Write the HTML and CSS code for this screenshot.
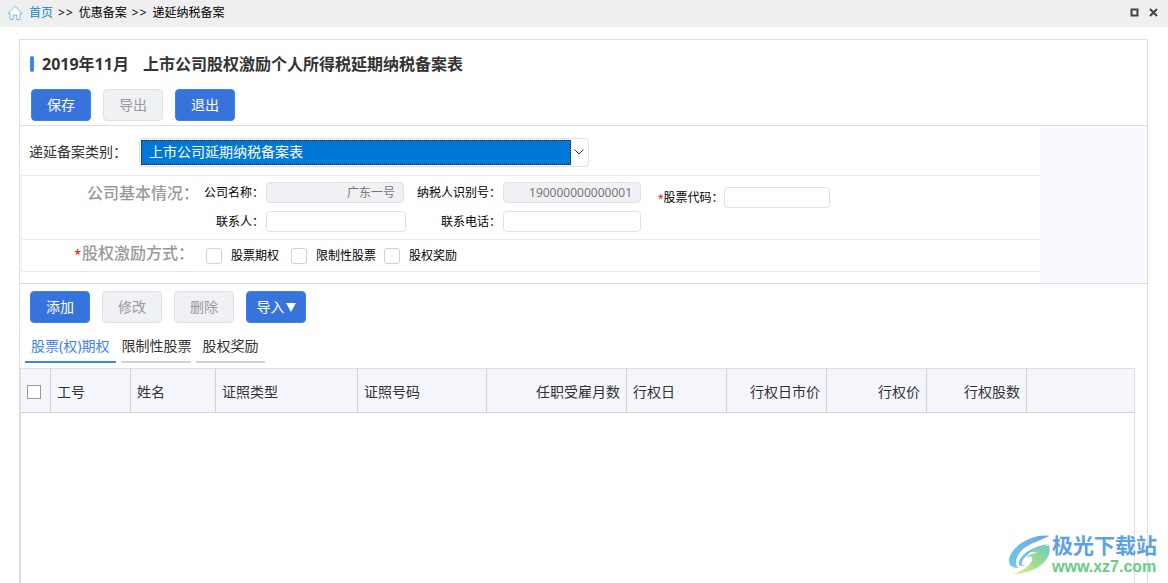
FILE: index.html
```html
<!DOCTYPE html>
<html lang="zh-CN">
<head>
<meta charset="utf-8">
<title>递延纳税备案</title>
<link rel="stylesheet" href="styles.css">
</head>
<body>
<header class="topbar">
  <svg class="home" viewBox="0 0 16 16" aria-hidden="true"><path d="M1 8.500 8 1.200l7 7.300h-2v6H9.800V10H6.200v4.500H3v-6z"/></svg>
  <nav class="crumbs">
    <a href="#">首页</a><span class="sep">&gt;&gt;</span><span>优惠备案</span><span class="sep">&gt;&gt;</span><span>递延纳税备案</span>
  </nav>
  <button class="win" type="button" aria-label="最大化"><svg viewBox="0 0 9 9"><path d="M1.500 1.500h6v6h-6z"/></svg></button>
  <button class="win" type="button" aria-label="关闭"><svg viewBox="0 0 9 9"><path d="M1 1l7 7M8 1l-7 7"/></svg></button>
</header>
<main class="panel">
  <h1 class="title"><span>2019年11月</span><span>上市公司股权激励个人所得税延期纳税备案表</span></h1>
  <div class="actions">
    <button class="btn primary" type="button">保存</button>
    <button class="btn" type="button" disabled>导出</button>
    <button class="btn primary" type="button">退出</button>
  </div>
  <section class="filing">
    <div class="form">
      <div class="category">
        <label for="kind">递延备案类别：</label>
        <div class="picker">
          <select id="kind"><option>上市公司延期纳税备案表</option></select>
          <svg viewBox="0 0 10 6" aria-hidden="true"><path d="M.5.5 5 5 9.500.5"/></svg>
        </div>
      </div>
      <div class="group">
        <div class="legend">公司基本情况：</div>
        <div class="fields">
          <label for="name">公司名称：</label><input class="short" id="name" value="广东一号" disabled>
          <label for="tax">纳税人识别号：</label><input id="tax" value="190000000000001" disabled>
          <label for="person">联系人：</label><input id="person">
          <label for="phone">联系电话：</label><input id="phone">
        </div>
        <div class="stock">
          <label for="code"><span class="req">*</span>股票代码：</label><input id="code">
        </div>
      </div>
      <div class="group modes">
        <div class="legend"><span class="req">*</span>股权激励方式：</div>
        <label><input type="checkbox">股票期权</label>
        <label><input type="checkbox">限制性股票</label>
        <label><input type="checkbox">股权奖励</label>
      </div>
    </div>
  </section>
  <div class="toolbar">
    <button class="btn primary" type="button">添加</button>
    <button class="btn" type="button" disabled>修改</button>
    <button class="btn" type="button" disabled>删除</button>
    <button class="btn primary" type="button">导入<svg viewBox="0 0 10 9" aria-hidden="true"><path d="M0 0h10L5 9z"/></svg></button>
  </div>
  <nav class="tabs">
    <a class="active" href="#">股票(权)期权</a>
    <a href="#">限制性股票</a>
    <a href="#">股权奖励</a>
  </nav>
  <div class="sheet">
    <table>
      <colgroup><col class="c-check"><col class="c-id"><col class="c-name"><col class="c-type"><col class="c-no"><col class="c-months"><col class="c-num"><col class="c-num"><col class="c-num"><col class="c-num"><col></colgroup>
      <thead>
        <tr>
          <th class="check"><input type="checkbox" aria-label="全选"></th>
          <th>工号</th><th>姓名</th><th>证照类型</th><th>证照号码</th>
          <th class="num">任职受雇月数</th><th>行权日</th><th class="num">行权日市价</th><th class="num">行权价</th><th class="num">行权股数</th><th></th>
        </tr>
      </thead>
    </table>
  </div>
</main>
<div class="brand">
  <svg viewBox="4 6 44 42" aria-hidden="true">
    <defs>
      <linearGradient id="blue" x1="0" y1="1" x2="1" y2="0"><stop offset="0" stop-color="#66c0ee"/><stop offset="1" stop-color="#5b9ee2"/></linearGradient>
      <linearGradient id="leaf" x1="0" y1="1" x2="1" y2="0"><stop offset="0" stop-color="#ece77a"/><stop offset=".5" stop-color="#90da85"/><stop offset="1" stop-color="#62c6b4"/></linearGradient>
    </defs>
    <path fill="url(#blue)" d="M45 8C31 5 5 18 5 33c0 4 3 7 9 7-4-5-2-12 5-19 7-6 17-8 26-13z"/>
    <path fill="url(#blue)" d="M15 37c-1-8 9-17 29-21-6 4-12 4-17 8-6 4-10 9-9 13 3 1 6 0 8-2-3 3-8 4-11 2z"/>
    <path fill="url(#leaf)" d="M26 24c7-5 14-5 19-7 4 12-9 28-36 29 10-3 18-9 19-14 1-4-2-4-6-3 3-3 8-4 12-4-2-1-5-1-8-1z"/>
  </svg>
  <div><div class="brand-name">极光下载站</div><div class="brand-url">www.xz7.com</div></div>
</div>
</body>
</html>
```
FILE: styles.css
```css
* { box-sizing: border-box; }
body {
  margin: 0;
  min-height: 100vh;
  display: flex;
  flex-direction: column;
  position: relative;
  background: #fff;
  color: #333;
  font: 14px/20px "Noto Sans", "Noto Sans CJK SC", sans-serif;
}
button, input, select { font: inherit; }
a { color: inherit; text-decoration: none; }
.topbar {
  height: 27px;
  padding: 0 10px 2px 7px;
  display: flex;
  align-items: center;
  background: #efefef;
  color: #000;
  font-size: 12px;
}
.home { width: 16px; height: 16px; fill: #fff; stroke: #7fb9de; margin-right: 6px; }
.crumbs { flex: 1; display: flex; }
.crumbs a { color: #1487c9; }
.sep { margin: 0 5px; letter-spacing: 1px; }
.win { width: 9px; height: 9px; margin-left: 10px; padding: 0; border: 0; background: none; display: flex; }
.win svg { width: 9px; height: 9px; fill: none; stroke: #444; stroke-width: 2; }
.panel {
  flex: 1;
  display: flex;
  flex-direction: column;
  margin: 12px 20px 0 19px;
  border: 1px solid #dcdee1;
  border-bottom: 0;
}
.title {
  margin: 14px 0 0 10px;
  display: flex;
  align-items: center;
  font-size: 16px;
  line-height: 20px;
}
.title::before { content: ""; width: 4px; height: 16px; margin-right: 8px; border-radius: 2px; background: #3e82f7; }
.title span + span { margin-left: 14px; }
.actions { display: flex; gap: 12px; padding: 15px 11px 4px; }
.btn {
  width: 60px;
  height: 32px;
  padding: 0;
  display: flex;
  align-items: center;
  justify-content: center;
  border: 1px solid #dfe1e6;
  border-radius: 4px;
  background: #f0f1f5;
  color: #999;
}
.btn.primary { background: #3674dc; border-color: #3e82f7; color: #fff; }
.btn svg { width: 10px; height: 9px; margin-left: 1px; fill: #fff; }
.filing {
  display: flex;
  border: 1px solid #dcdee1;
  border-width: 1px 0;
  background: #f9faff;
}
.form { flex: 1; margin-right: 107px; padding-bottom: 11px; background: #fff; }
.category { height: 49px; display: flex; align-items: center; padding: 3px 10px 0 9px; }
.category label { width: 110px; }
.picker {
  width: 450px;
  height: 29px;
  padding: 1px;
  display: flex;
  align-items: center;
  border: 1px solid #dfe1e6;
  border-radius: 4px;
}
.picker select {
  flex: 1;
  height: 25px;
  padding: 0 7px;
  appearance: none;
  border: 1px dotted #1c1c1c;
  border-radius: 0;
  background: #0078d7;
  color: #fff;
}
.picker svg { width: 10px; height: 6px; margin: 0 3px; fill: none; stroke: #333; }
.group {
  margin-left: 1px;
  display: flex;
  border-top: 1px solid #ebebed;
  border-left: 1px solid #ebebed;
  color: #000;
  font-size: 12px;
}
.legend {
  width: 177px;
  text-align: right;
  color: #999;
  font-size: 16px;
  font-weight: 500;
  line-height: 20px;
  padding-top: 7px;
}
.fields {
  display: grid;
  grid-template-columns: 67px 140px 97px 138px;
  gap: 8px 0;
  padding: 6px 0 7px;
}
.fields label { padding-right: 2px; }
.fields label, .stock label { text-align: right; line-height: 21px; }
.fields input, .stock input {
  width: 100%;
  height: 21px;
  padding: 0 8px 1px;
  border: 1px solid #dfe1e6;
  border-radius: 4px;
  background: #fff;
  text-align: right;
}
.fields .short { width: 138px; }
.fields input:disabled { background: #f0f1f5; color: #777; }
.stock { display: flex; padding: 11px 0 0 17px; }
.stock input { width: 106px; }
.stock .req { font-size: 10px; }
.req { color: #f00; }
.legend .req { margin-right: 1px; font-size: 12px; }
.modes { height: 33px; border-bottom: 1px solid #ebebed; align-items: center; }
.modes .legend { width: 172px; margin-right: 12px; padding: 0 0 4px; }
.modes label { display: flex; align-items: center; margin-right: 12px; }
.modes label + label + label { margin-left: -4px; }
input[type="checkbox"] {
  appearance: none;
  width: 16px;
  height: 16px;
  margin: 0 9px 0 0;
  border: 1px solid #cfd1d9;
  border-radius: 3px;
  background: #fff;
}
.toolbar { display: flex; gap: 12px; padding: 7px 10px 0; }
.tabs { display: flex; gap: 5px; padding: 13px 5px 5px; }
.tabs a { padding-bottom: 5px; border-bottom: 2px solid #d0d2d9; }
.tabs a:last-child { padding-left: 6px; padding-right: 7px; }
.tabs .active { padding-left: 6px; padding-right: 7px; color: #3e82f7; border-color: #3e82f7; }
.sheet { flex: 1; margin-right: 12px; border: 1px solid #dcdee1; border-bottom: 0; }
table { width: 100%; table-layout: fixed; border-collapse: separate; border-spacing: 0; }
th {
  height: 44px;
  padding: 3px 6px 0;
  border: 0 solid #d0d2d9;
  border-width: 0 1px 1px 0;
  background: #f4f6fb;
  font-weight: 400;
  text-align: left;
}
th:last-child { border-right: 0; }
.num { text-align: right; }
.check input[type="checkbox"] { display: block; width: 14px; height: 14px; margin: 0; border-color: #999; border-radius: 0; }
.c-check { width: 30px; }
.c-id { width: 80px; }
.c-name { width: 85px; }
.c-type { width: 142px; }
.c-no { width: 129px; }
.c-months { width: 140px; }
.c-num { width: 100px; }
.brand { position: absolute; right: 11px; bottom: 7px; display: flex; align-items: center; opacity: 0.9; }
.brand svg { width: 44px; height: 42px; }
.brand-name { color: #4a97e0; font-size: 21px; font-weight: 700; line-height: 24px; }
.brand-url { color: #55c878; font: 700 16px/19px "Liberation Sans", sans-serif; }
```
